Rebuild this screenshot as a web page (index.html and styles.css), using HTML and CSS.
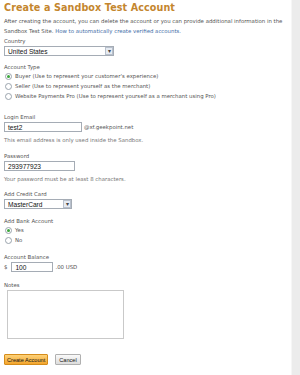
FILE: index.html
```html
<!DOCTYPE html>
<html>
<head>
    <meta charset=utf-8 />
    <link rel="stylesheet" href="styles.css">
</head>
<body>
  <div class="page">
    <form class="main">
      <h1>Create a Sandbox Test Account</h1>
      <p class="intro">After creating the account, you can delete the account or you can provide additional information in the Sandbox Test Site. <a href="#">How to automatically create verified accounts.</a></p>

      <div class="field first">
        <label class="lbl">Country</label>
        <div class="select wide"><span>United States</span><i>&#9662;</i></div>
      </div>

      <div class="field near">
        <label class="lbl">Account Type</label>
        <label class="radio"><span class="dot on"></span>Buyer (Use to represent your customer's experience)</label>
        <label class="radio"><span class="dot"></span>Seller (Use to represent yourself as the merchant)</label>
        <label class="radio"><span class="dot"></span>Website Payments Pro (Use to represent yourself as a merchant using Pro)</label>
      </div>

      <div class="field big">
        <label class="lbl">Login Email</label>
        <div class="row"><div class="input email">test2</div><span>@xf.geekpoint.net</span></div>
        <p class="hint">This email address is only used inside the Sandbox.</p>
      </div>

      <div class="field wider">
        <label class="lbl">Password</label>
        <div class="input pass">293977923</div>
        <p class="hint">Your password must be at least 8 characters.</p>
      </div>

      <div class="field">
        <label class="lbl">Add Credit Card</label>
        <div class="select card"><span>MasterCard</span><i>&#9662;</i></div>
      </div>

      <div class="field">
        <label class="lbl">Add Bank Account</label>
        <label class="radio"><span class="dot on"></span>Yes</label>
        <label class="radio"><span class="dot"></span>No</label>
      </div>

      <div class="field">
        <label class="lbl">Account Balance</label>
        <div class="row"><span>$</span><div class="input balance">100</div><span>.00 USD</span></div>
      </div>

      <div class="field notes-field">
        <label class="lbl">Notes</label>
        <div class="notes"></div>
      </div>

      <div class="buttons">
        <button type="button" class="btn primary">Create Account</button>
        <button type="button" class="btn">Cancel</button>
      </div>
    </form>
    <div class="edge"></div>
  </div>
</body>
</html>
```

FILE: styles.css
```css
body {
    margin: 0;
    background: #fff;
    color: #555;
    font-family: "DejaVu Sans", Verdana, sans-serif;
    font-size: 5.4px;
}

.page {
    display: flex;
    min-height: 375px;
}

.main {
    flex: 1;
    padding: 2px 4px 0;
}

.edge {
    width: 8px;
    background: #ececec;
    border-left: 1px solid #f6f6f6;
}

h1 {
    margin: 0;
    font-size: 9.6px;
    line-height: 11px;
    color: #c4862e;
    letter-spacing: 0.1px;
}

p {
    margin: 0;
}

.intro {
    margin-top: 3px;
    line-height: 10px;
}

a {
    color: #3f6ea8;
    text-decoration: none;
}

.field {
    margin-top: 8px;
}

.field.first {
    margin-top: 1px;
}

.field.near {
    margin-top: 7px;
}

.field.big {
    margin-top: 12px;
}

.field.wider {
    margin-top: 9px;
}

.field.notes-field {
    margin-top: 9px;
}

.lbl {
    display: block;
    line-height: 8px;
}

.select,
.input {
    display: flex;
    align-items: center;
    height: 10px;
    box-sizing: border-box;
    border: 1px solid #a5acb5;
    background: #fff;
    color: #111;
    font-family: "Liberation Sans", Arial, sans-serif;
    font-size: 6.6px;
    padding: 0 3px;
}

.field > .select,
.field > .input,
.field > .row {
    margin-top: 1px;
}

.select {
    justify-content: space-between;
    padding-right: 0;
}

.select i {
    font-style: normal;
    width: 8px;
    height: 8px;
    box-sizing: border-box;
    border: 1px solid #b8c0cc;
    background: #e6ebf2;
    font-size: 6px;
    line-height: 6px;
    text-align: center;
    color: #444;
}

.wide {
    width: 110px;
}

.card {
    width: 68px;
}

.radio {
    display: flex;
    align-items: center;
    height: 10px;
    padding-left: 1px;
}

.dot {
    width: 5px;
    height: 5px;
    border: 1px solid #9aa4ad;
    border-radius: 50%;
    margin-right: 3px;
    background: #fff;
    position: relative;
}

.dot.on::after {
    content: "";
    position: absolute;
    left: 1px;
    top: 1px;
    width: 3px;
    height: 3px;
    border-radius: 50%;
    background: #3aa53a;
}

.row {
    display: flex;
    align-items: center;
    gap: 2px;
}

.email {
    width: 78px;
}

.pass {
    width: 71px;
}

.balance {
    width: 42px;
    margin-left: 2px;
}

.hint {
    margin-top: 5px;
    color: #777;
}

.notes {
    width: 117px;
    height: 49px;
    margin-left: 3px;
    margin-top: 1px;
    box-sizing: border-box;
    border: 1px solid #c9c9c9;
}

.buttons {
    display: flex;
    gap: 7px;
    margin-top: 15px;
}

.btn {
    height: 11px;
    padding: 0 3px;
    border: 1px solid #b0b0b0;
    background: linear-gradient(#fafafa, #dcdcdc);
    font-family: "Liberation Sans", Arial, sans-serif;
    font-size: 5.6px;
    color: #111;
    border-radius: 1px;
    white-space: nowrap;
}

.btn.primary {
    padding: 0 2px;
    border-color: #d58c1a;
    background: linear-gradient(#fdd27a, #f3a52c);
}
```
